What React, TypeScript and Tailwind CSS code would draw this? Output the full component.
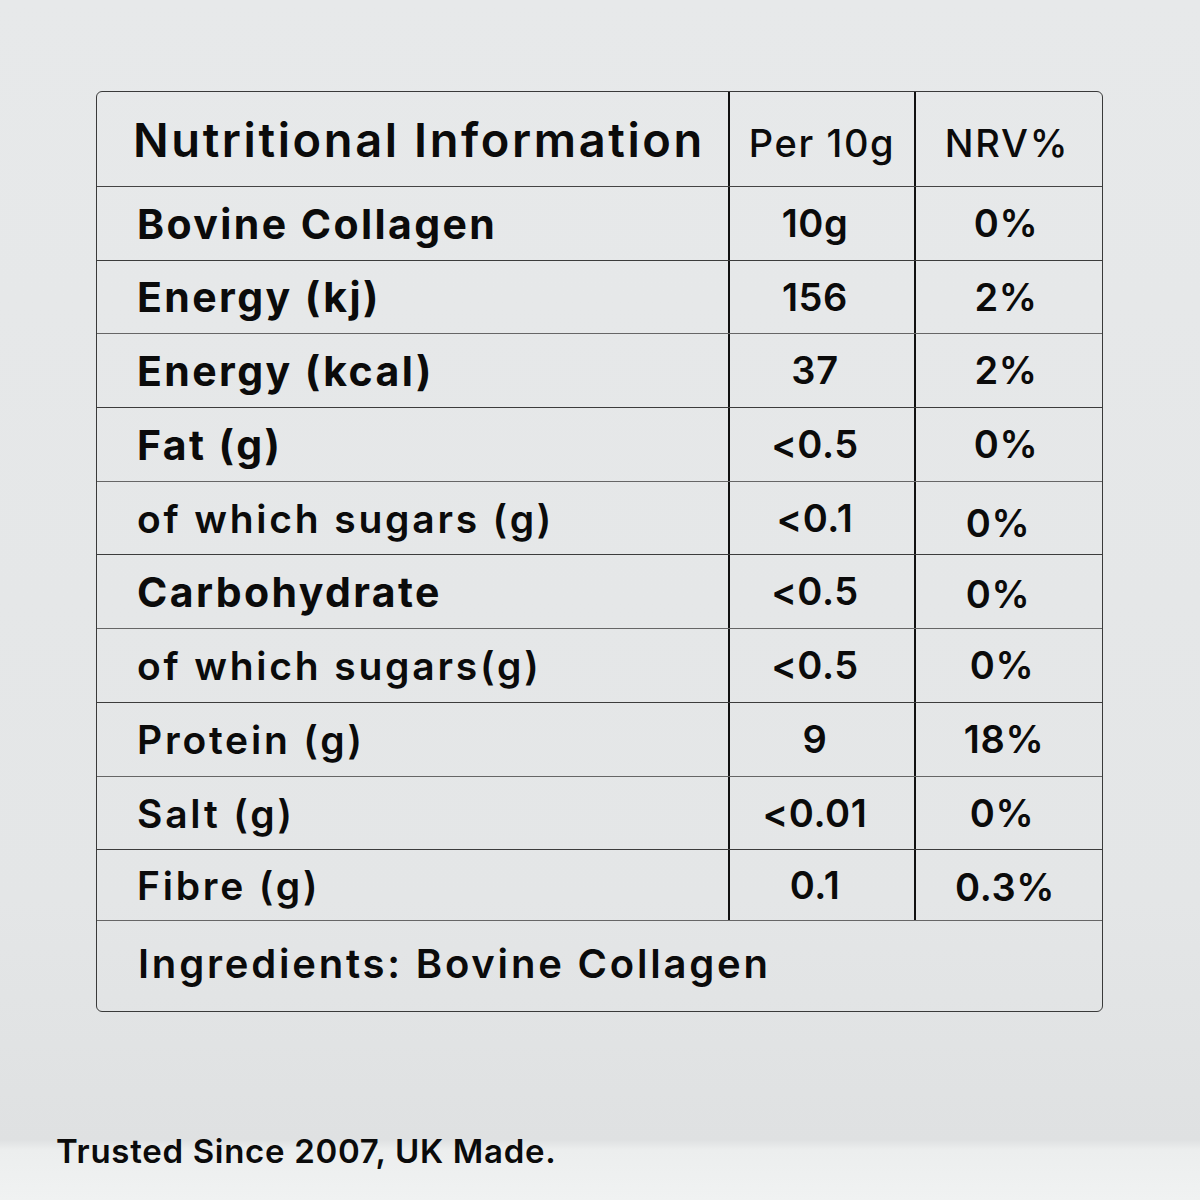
import React from "react";

type Row = { label: string; bold: boolean; value: string; nrv: string; h: string; nrvCls: string };

const rows: Row[] = [
  { label: "Bovine Collagen", bold: true, value: "10g", nrv: "0%", h: "h-[74px]", nrvCls: "pr-[6px]" },
  { label: "Energy (kj)", bold: true, value: "156", nrv: "2%", h: "h-[73px]", nrvCls: "pr-[6px]" },
  { label: "Energy (kcal)", bold: true, value: "37", nrv: "2%", h: "h-[74px]", nrvCls: "pr-[6px]" },
  { label: "Fat (g)", bold: true, value: "<0.5", nrv: "0%", h: "h-[74px]", nrvCls: "pr-[6px]" },
  { label: "of which sugars (g)", bold: false, value: "<0.1", nrv: "0%", h: "h-[73px]", nrvCls: "pr-[22px] pt-[10px]" },
  { label: "Carbohydrate", bold: true, value: "<0.5", nrv: "0%", h: "h-[74px]", nrvCls: "pr-[22px] pt-[6px]" },
  { label: "of which sugars(g)", bold: false, value: "<0.5", nrv: "0%", h: "h-[74px]", nrvCls: "pr-[14px]" },
  { label: "Protein (g)", bold: false, value: "9", nrv: "18%", h: "h-[74px]", nrvCls: "pr-[10px]" },
  { label: "Salt (g)", bold: false, value: "<0.01", nrv: "0%", h: "h-[73px]", nrvCls: "pr-[14px]" },
  { label: "Fibre (g)", bold: false, value: "0.1", nrv: "0.3%", h: "h-[71px]", nrvCls: "pr-[8px] pt-[4px]" },
];

export default function App() {
  return (
    <div
      className="w-[1200px] h-[1200px] flex flex-col text-[#0b0b0b] bg-[linear-gradient(to_bottom,#e7e9ea_0px,#e4e6e7_900px,#dfe1e2_1140px,#eceeee_1150px,#f0f2f2_1200px)]"
      style={{ fontFamily: "Inter, 'Open Sans', sans-serif" }}
    >
      <div className="ml-[96px] mt-[91px] w-[1007px] rounded-[6px] border-[1.5px] border-[#3a3a3a] overflow-hidden">
        {/* header */}
        <div className="grid grid-cols-[633px_186px_1fr] h-[95px] border-b-[1.5px] border-[#444]">
          <div className="flex items-center pl-[36px] pt-[2px] border-r-[2.5px] border-[#111] text-[47px] font-semibold tracking-[2.6px]">
            Nutritional Information
          </div>
          <div className="flex items-center justify-center pt-[8px] border-r-[2.5px] border-[#111] text-[38px] font-medium tracking-[1.6px]">
            Per 10g
          </div>
          <div className="flex items-center justify-center pt-[8px] pr-[4px] text-[38px] font-medium tracking-[1.8px]">
            NRV%
          </div>
        </div>
        {rows.map((r, i) => (
          <div
            key={i}
            className={`grid grid-cols-[633px_186px_1fr] ${r.h} border-b-[1.5px] ${i % 2 === 0 ? "border-[#3c3c3c]" : "border-[#666]"}`}
          >
            <div
              className={`flex items-center pl-[40px] pt-[2px] border-r-[2.5px] border-[#111] ${r.bold ? "text-[41px] font-bold tracking-[2.4px]" : "text-[39px] font-semibold tracking-[2.8px]"}`}
            >
              {r.label}
            </div>
            <div className="flex items-center justify-center pr-[14px] border-r-[2.5px] border-[#111] text-[38px] font-semibold tracking-[0.6px]">
              {r.value}
            </div>
            <div className={`flex items-center justify-center text-[38px] font-semibold tracking-[0.6px] ${r.nrvCls}`}>
              {r.nrv}
            </div>
          </div>
        ))}
        <div className="h-[90px] flex items-center pl-[41px] pb-[4px] text-[40px] font-semibold tracking-[2.8px]">
          Ingredients: Bovine Collagen
        </div>
      </div>
      <div className="mt-[119px] pl-[56px] text-[33px] leading-[40px] font-semibold tracking-[0.7px]">
        Trusted Since 2007, UK Made.
      </div>
    </div>
  );
}
